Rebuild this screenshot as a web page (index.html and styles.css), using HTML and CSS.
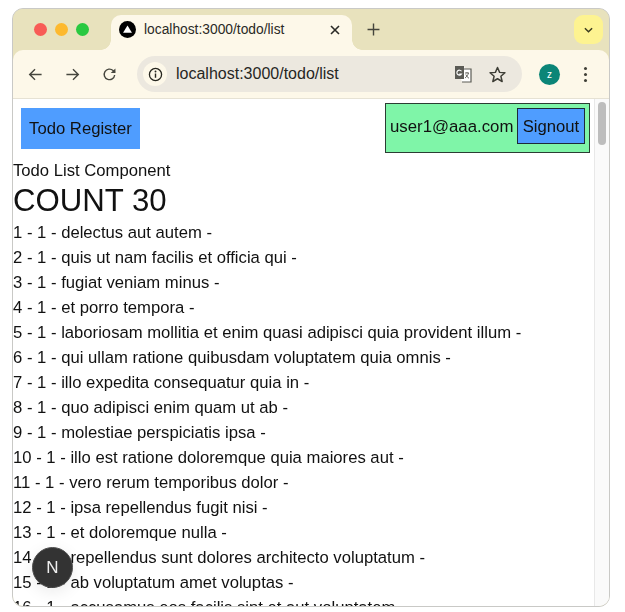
FILE: index.html
```html
<!DOCTYPE html>
<html lang="en">
<head>
<meta charset="utf-8">
<title>localhost:3000/todo/list</title>
<link rel="stylesheet" href="styles.css">
</head>
<body>
<div class="window">
  <div class="tabstrip">
    <div class="lights"><span class="light red"></span><span class="light yellow"></span><span class="light green"></span></div>
    <div class="tab">
      <svg class="favicon" viewBox="0 0 16 16"><circle cx="8" cy="8" r="8" fill="#000"/><path d="M8 4.2 12.2 11H3.8Z" fill="#fff"/></svg>
      <span class="tab-title">localhost:3000/todo/list</span>
      <svg class="tab-close" viewBox="0 0 10 10"><path d="M1 1 9 9M9 1 1 9" stroke="#2a2a26" stroke-width="1.6" fill="none"/></svg>
    </div>
    <svg class="newtab" viewBox="0 0 12 12"><path d="M6 .5V11.500M.5 6H11.500" stroke="#44443c" stroke-width="1.300" fill="none"/></svg>
    <div class="tabsearch"><svg viewBox="0 0 10 6" class="chev"><path d="M1 1 5 5 9 1" stroke="#3a3a20" stroke-width="1.600" fill="none"/></svg></div>
  </div>
  <div class="toolbar">
    <svg class="nav" viewBox="0 0 16 16"><path d="M14.500 8H2M7.500 2.300 1.800 8l5.700 5.700" stroke="#47473f" stroke-width="1.500" fill="none"/></svg>
    <svg class="nav" viewBox="0 0 16 16"><path d="M1.500 8H14M8.500 2.300 14.200 8l-5.700 5.700" stroke="#47473f" stroke-width="1.500" fill="none"/></svg>
    <svg class="nav" viewBox="0 0 16 16"><path d="M13.500 8.500A5.600 5.600 0 1 1 11.800 3.800L13.800 5.800" stroke="#47473f" stroke-width="1.500" fill="none"/><path d="M14.300 1.500V6.500H9.300Z" fill="#47473f"/></svg>
    <div class="omnibox">
      <span class="info"><svg viewBox="0 0 16 16"><circle cx="8" cy="8" r="6.500" stroke="#26261f" stroke-width="1.400" fill="none"/><path d="M8 7v4.500" stroke="#26261f" stroke-width="1.500"/><circle cx="8" cy="4.800" r="1" fill="#26261f"/></svg></span>
      <span class="url">localhost:3000/todo/list</span>
      <svg class="translate" viewBox="0 0 18 18"><path d="M1 1h9l1 3h6v13H8l-1-3H1Z" fill="#fff"/><path d="M1 1h9v13H1Z" fill="#5b5b55"/><path d="M8 4h9v13H8" fill="none" stroke="#5b5b55" stroke-width="1.200"/><path d="M7.500 6.300A2.500 2.500 0 1 0 7.500 9H5.300" stroke="#fff" stroke-width="1.100" fill="none"/><path d="M11 8h4M13 7v1M14.500 8c-.5 2-2 4-3.500 5M11.800 9.500c.6 1.500 1.800 3 3.200 3.800" stroke="#5b5b55" stroke-width=".9" fill="none"/></svg>
      <svg class="star" viewBox="0 0 16 16"><path d="M8 1.400 10 6l5 .4-3.800 3.300 1.200 4.900L8 12l-4.400 2.600 1.200-4.900L1 6.400 6 6Z" fill="none" stroke="#3f3f37" stroke-width="1.400" stroke-linejoin="round"/></svg>
    </div>
    <span class="avatar">z</span>
    <span class="menu"><i></i><i></i><i></i></span>
  </div>
  <div class="viewport">
    <main class="page">
      <header class="topbar">
        <a class="register">Todo Register</a>
        <div class="userbox"><span>user1@aaa.com</span><button class="signout">Signout</button></div>
      </header>
      <div class="component">Todo List Component</div>
      <div class="count">COUNT 30</div>
      <ul class="todos">
        <li>1 - 1 - delectus aut autem -</li>
        <li>2 - 1 - quis ut nam facilis et officia qui -</li>
        <li>3 - 1 - fugiat veniam minus -</li>
        <li>4 - 1 - et porro tempora -</li>
        <li>5 - 1 - laboriosam mollitia et enim quasi adipisci quia provident illum -</li>
        <li>6 - 1 - qui ullam ratione quibusdam voluptatem quia omnis -</li>
        <li>7 - 1 - illo expedita consequatur quia in -</li>
        <li>8 - 1 - quo adipisci enim quam ut ab -</li>
        <li>9 - 1 - molestiae perspiciatis ipsa -</li>
        <li>10 - 1 - illo est ratione doloremque quia maiores aut -</li>
        <li>11 - 1 - vero rerum temporibus dolor -</li>
        <li>12 - 1 - ipsa repellendus fugit nisi -</li>
        <li>13 - 1 - et doloremque nulla -</li>
        <li>14 - 1 - repellendus sunt dolores architecto voluptatum -</li>
        <li>15 - 1 - ab voluptatum amet voluptas -</li>
        <li>16 - 1 - accusamus eos facilis sint et aut voluptatem -</li>
      </ul>
    </main>
    <div class="scrollbar"><span class="thumb"></span></div>
    <div class="next-badge">N</div>
  </div>
</div>
</body>
</html>
```
FILE: styles.css
```css
* { box-sizing: border-box; }
html, body { margin: 0; height: 612px; background: #fff; overflow: hidden; }
body { padding: 8px 15px 5px 12px; font-family: "Liberation Sans", Arial, sans-serif; color: #111; }
.window { height: 599px; display: flex; flex-direction: column; border: 1px solid #c9c9c6; border-radius: 11px; overflow: hidden; background: #e8e2bd; filter: blur(.3px); }

.tabstrip { height: 41px; flex: none; display: flex; align-items: flex-end; background: #e8e2bd; }
.lights { width: 98px; height: 41px; flex: none; display: flex; align-items: center; gap: 8px; padding: 0 0 0 21px; }
.light { width: 13px; height: 13px; border-radius: 50%; }
.red { background: #f85c56; }
.yellow { background: #fdb92e; }
.green { background: #29c940; }
.tab { position: relative; width: 241px; height: 35px; flex: none; display: flex; align-items: center; padding: 0 12px 6px 8px; background: #fdf8e9; border-radius: 10px 10px 0 0; }
.tab::before, .tab::after { content: ""; position: absolute; bottom: 0; width: 10px; height: 10px; }
.tab::before { left: -10px; background: radial-gradient(circle at 0 0, #e8e2bd 9.5px, #fdf8e9 10px); }
.tab::after { right: -10px; background: radial-gradient(circle at 100% 0, #e8e2bd 9.5px, #fdf8e9 10px); }
.favicon { width: 17px; height: 17px; flex: none; }
.tab-title { margin-left: 8px; flex: 1; font: 13.800px "Liberation Sans", Arial, sans-serif; color: #2a2a26; white-space: nowrap; }
.tab-close { width: 10px; height: 10px; flex: none; }
.newtab { width: 13px; height: 13px; flex: none; margin: 0 0 14px 15px; }
.tabsearch { width: 29px; height: 29px; flex: none; margin: 0 6px 6px auto; display: flex; align-items: center; justify-content: center; background: #fdf391; border-radius: 9px; }
.chev { width: 9px; height: 6px; }

.toolbar { height: 49px; flex: none; display: flex; align-items: center; background: #fdf8e9; border-bottom: 1px solid #e6e2d4; border-radius: 10px 10px 0 0; padding: 0 0 0 15px; }
.toolbar .nav { width: 15px; height: 15px; flex: none; margin-right: 22px; }
.toolbar .nav:nth-child(3) { margin-right: 20px; }
.omnibox { width: 385px; height: 36px; flex: none; display: flex; align-items: center; padding-left: 6px; background: #ece8df; border-radius: 18px; }
.info { width: 24px; height: 24px; flex: none; display: flex; align-items: center; justify-content: center; background: #fdf8e9; border-radius: 50%; }
.info svg { width: 15px; height: 15px; }
.url { margin-left: 9px; flex: 1; font-size: 16px; color: #26261f; white-space: nowrap; }
.translate { width: 18px; height: 18px; flex: none; margin-right: 17px; }
.star { width: 17px; height: 17px; flex: none; margin-right: 16px; }
.avatar { width: 21px; height: 21px; flex: none; margin-left: 17px; display: flex; align-items: center; justify-content: center; background: #0b8577; color: #fff; border-radius: 50%; font-size: 10px; }
.menu { margin-left: 24px; flex: none; display: flex; flex-direction: column; gap: 3px; }
.menu i { width: 3px; height: 3px; background: #3f3f37; border-radius: 50%; }

.viewport { flex: 1; min-height: 0; display: flex; position: relative; background: #fff; }
.page { flex: 1; min-width: 0; overflow: hidden; }
.scrollbar { width: 15px; flex: none; padding: 3px 3px 0 3px; background: #fafafa; border-left: 1px solid #e8e8e8; }
.thumb { display: block; height: 43px; background: #bdbdbd; border-radius: 4px; }

.topbar { display: flex; justify-content: space-between; align-items: flex-start; padding: 4px 4px 0 8px; height: 61px; }
.register { margin-top: 5px; width: 119px; height: 41px; display: flex; align-items: center; justify-content: center; background: #4f9dff; font-size: 16.670px; color: #111; }
.userbox { width: 205px; height: 50px; display: flex; align-items: flex-start; justify-content: space-between; padding: 4px 4px 0 4px; background: #7ff5a8; border: 1.500px solid #2b3d33; font-size: 16.800px; }
.userbox span { line-height: 38px; white-space: nowrap; }
.signout { width: 68px; height: 36px; flex: none; padding: 1px 0 0; background: #4f9dff; border: 1.500px solid #1d2a3a; font: 16.670px "Liberation Sans", Arial, sans-serif; color: #111; }
.component { font-size: 16.670px; line-height: 21px; }
.count { font-size: 31.200px; line-height: 38px; margin-top: 1px; }
.todos { list-style: none; margin: 0; padding: 0; font-size: 16.670px; }
.todos li { height: 25px; line-height: 25px; white-space: nowrap; }

.next-badge { position: absolute; left: 19px; top: 448px; width: 41px; height: 41px; display: flex; align-items: center; justify-content: center; background: #333; border: 1.500px solid #4f4f4f; border-radius: 50%; color: #eee; font-size: 17px; box-shadow: 0 4px 16px rgba(0,0,0,.08); }
```
